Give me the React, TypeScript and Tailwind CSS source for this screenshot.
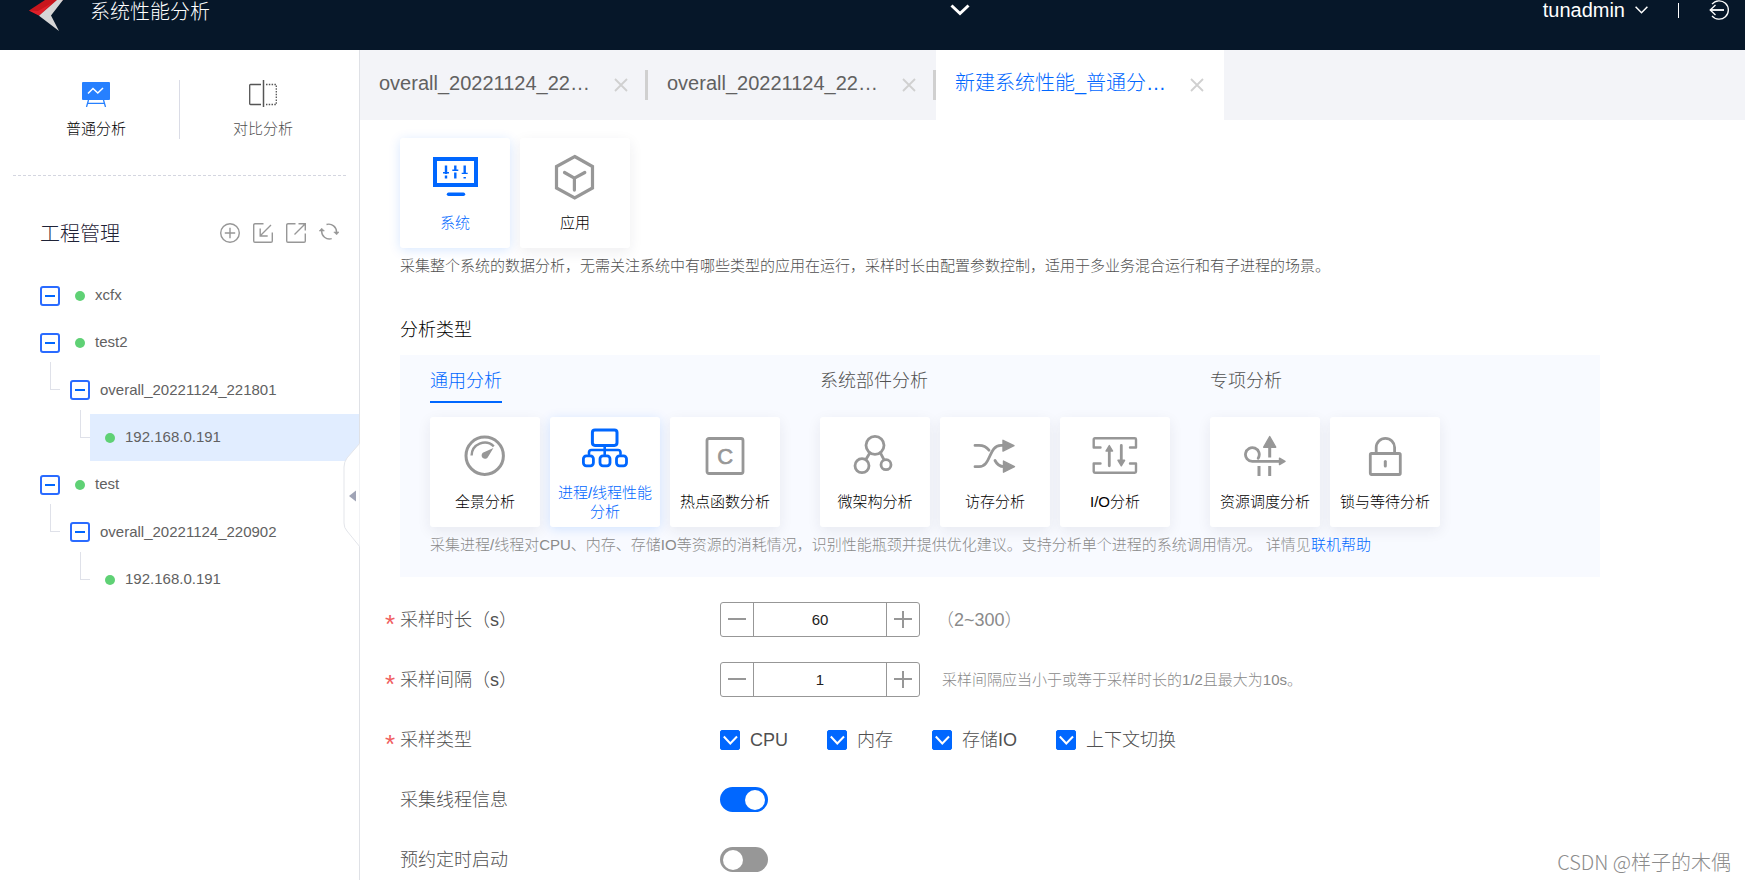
import { useState, type ReactNode } from "react";
import clsx from "clsx";

/* ---------- icons ---------- */

function CardSvg({ children }: { children: ReactNode }) {
  return (
    <svg
      viewBox="0 0 48 48"
      className="h-12 w-12 shrink-0"
      fill="none"
      stroke="currentColor"
      strokeWidth="2.8"
      strokeLinecap="round"
      strokeLinejoin="round"
      aria-hidden="true"
    >
      {children}
    </svg>
  );
}

const SystemIcon = () => (
  <CardSvg>
    <rect x="4" y="7" width="41" height="26" strokeWidth="4" strokeLinejoin="miter" />
    <path d="M17.5 42.3h15" strokeWidth="3.4" />
    <path d="M15 13.5v8.5M15 23.5v3M24.3 13.5v4.5M24.3 20.5v6M33.7 13.5v8.5M33.7 25v1.5" strokeWidth="2.4" strokeLinecap="butt" />
    <path d="M12 20.8h6M21.3 18.2h6M30.7 21.4h6" strokeWidth="1.4" strokeLinecap="butt" />
  </CardSvg>
);

const AppIcon = () => (
  <CardSvg>
    <path d="M23.7 4.5 41.5 14.5V36L23.7 46 5.5 36V14.5Z" strokeWidth="3.2" strokeLinejoin="miter" />
    <path d="M13.5 20.5l9.9 5.6 10.4-5.6M23.4 26.1v12" strokeWidth="3.2" />
  </CardSvg>
);

const GaugeIcon = () => (
  <CardSvg>
    <circle cx="23.7" cy="24.7" r="18.7" strokeWidth="3" />
    <path d="M10.6 24.5A13.1 13.1 0 0 1 32.8 15.3" strokeWidth="2.4" strokeLinecap="butt" />
    <path d="M32.4 17 27 26a3.4 3.4 0 1 1-5.2-4.2Z" fill="currentColor" stroke="none" />
  </CardSvg>
);

const ProcessIcon = () => (
  <CardSvg>
    <rect x="11.4" y="8" width="24.6" height="15.4" rx="2.6" strokeWidth="3" />
    <path d="M23.7 23.4v9M8 32V30.5a2.5 2.5 0 0 1 2.5-2.5h26.5a2.5 2.5 0 0 1 2.5 2.5V32" strokeWidth="2.6" />
    <rect x="2.4" y="33.8" width="10" height="10" rx="3" />
    <rect x="19" y="33.8" width="10" height="10" rx="3" />
    <rect x="35.5" y="33.8" width="10" height="10" rx="3" />
  </CardSvg>
);

const HotspotIcon = () => (
  <CardSvg>
    <rect x="6" y="7.5" width="36" height="35" rx="2" />
    <text
      x="24.2"
      y="32.6"
      fontSize="22"
      textAnchor="middle"
      fill="currentColor"
      strokeWidth="0.7"
      className="font-['Liberation_Sans',sans-serif]"
    >
      C
    </text>
  </CardSvg>
);

const MicroIcon = () => (
  <CardSvg>
    <circle cx="24" cy="14.3" r="9" />
    <circle cx="11" cy="34.7" r="7" />
    <circle cx="35" cy="33.7" r="5" />
    <path d="M18.8 22l-3.6 6M29.4 21.8l3.4 6.6" />
  </CardSvg>
);

const MemoryIcon = () => (
  <CardSvg>
    <path d="M4 14.4h4c4.5 0 7.5 1.6 10 4.8" />
    <path d="M4 35.7h4c12.5 0 9-21 22-21.3h3" />
    <path d="M24 29.5c2 4 4.5 6 9 6.2" />
    <path d="M32 9.3 43 14.7 32 20.1ZM32.5 30 43.5 35.7 32.5 41.2Z" fill="currentColor" strokeWidth="1.4" />
  </CardSvg>
);

const IoIcon = () => (
  <CardSvg>
    <path d="M9.5 16.5H2.7V8.5a1.2 1.2 0 0 1 1.2-1.2h39.9a1.2 1.2 0 0 1 1.2 1.2v8H39" strokeWidth="2.4" />
    <path d="M9.5 32.5H2.7v8a1.2 1.2 0 0 0 1.2 1.2h39.9a1.2 1.2 0 0 0 1.2-1.2v-8H39" strokeWidth="2.4" />
    <path d="M18.3 18v16.8M30.3 14.5v16" />
    <path d="M18.3 14.5l3.3 5.5h-6.6ZM30.3 34.8l3.3-5.5h-6.6Z" fill="currentColor" strokeWidth="1.4" />
  </CardSvg>
);

const ScheduleIcon = () => (
  <CardSvg>
    <path d="M17.2 27.2A6.9 6.9 0 1 0 11.3 30.4H39" />
    <path d="M28.7 17v9.5M28.7 35v10M18 35v10" strokeLinecap="butt" strokeWidth="3" />
    <path d="M28.7 5.5l6 10.7h-12ZM38.5 27.2l5.5 3.2-5.5 3.2Z" fill="currentColor" strokeWidth="1.4" />
  </CardSvg>
);

const LockIcon = () => (
  <CardSvg>
    <rect x="9.3" y="22.5" width="30" height="21" rx="1.2" />
    <path d="M15.2 22v-5.5a9.2 9.2 0 0 1 18.4 0V22" />
    <path d="M24.3 30.5v4.5" strokeWidth="3" />
  </CardSvg>
);

const CloseIcon = () => (
  <svg viewBox="0 0 14 14" className="h-3.5 w-3.5" stroke="currentColor" strokeWidth="1.8" aria-hidden="true">
    <path d="M1 1l12 12M13 1L1 13" />
  </svg>
);

function ToolSvg({ children }: { children: ReactNode }) {
  return (
    <svg viewBox="0 0 20 20" className="h-5 w-5" fill="none" stroke="currentColor" strokeWidth="1.4" aria-hidden="true">
      {children}
    </svg>
  );
}

const tools = [
  {
    label: "新建工程",
    icon: (
      <ToolSvg>
        <circle cx="10" cy="10" r="9.3" />
        <path d="M10 4.8v10.4M4.8 10h10.4" />
      </ToolSvg>
    ),
  },
  {
    label: "导入",
    icon: (
      <ToolSvg>
        <path d="M10.5.7H2A1.3 1.3 0 0 0 .7 2v16A1.3 1.3 0 0 0 2 19.3h16a1.3 1.3 0 0 0 1.3-1.3V9.5" />
        <path d="M18 2 7.5 12.5M7.2 5.5v7.5h7.5" />
      </ToolSvg>
    ),
  },
  {
    label: "导出",
    icon: (
      <ToolSvg>
        <path d="M9.5.7H2A1.3 1.3 0 0 0 .7 2v16A1.3 1.3 0 0 0 2 19.3h16a1.3 1.3 0 0 0 1.3-1.3v-7.5" />
        <path d="M8.5 11.5 19 1M12.5.7h6.8v6.8" />
      </ToolSvg>
    ),
  },
  {
    label: "刷新",
    icon: (
      <ToolSvg>
        <path d="M7.5 1.5a7.8 7.8 0 0 1 10 8M12.7 15.7A7.8 7.8 0 0 1 2.7 7.5" />
        <path d="M14.8 9l2.8 2.8L20 9ZM.2 8 2.7 5.2 5.4 8Z" fill="currentColor" strokeWidth=".6" />
      </ToolSvg>
    ),
  },
];

/* ---------- data ---------- */

type Card = { name: string; icon: ReactNode };

const targets: Card[] = [
  { name: "系统", icon: <SystemIcon /> },
  { name: "应用", icon: <AppIcon /> },
];

const groups: { title: string; cards: Card[] }[] = [
  {
    title: "通用分析",
    cards: [
      { name: "全景分析", icon: <GaugeIcon /> },
      { name: "进程/线程性能分析", icon: <ProcessIcon /> },
      { name: "热点函数分析", icon: <HotspotIcon /> },
    ],
  },
  {
    title: "系统部件分析",
    cards: [
      { name: "微架构分析", icon: <MicroIcon /> },
      { name: "访存分析", icon: <MemoryIcon /> },
      { name: "I/O分析", icon: <IoIcon /> },
    ],
  },
  {
    title: "专项分析",
    cards: [
      { name: "资源调度分析", icon: <ScheduleIcon /> },
      { name: "锁与等待分析", icon: <LockIcon /> },
    ],
  },
];

const tree = [
  { level: 0, name: "xcfx" },
  { level: 0, name: "test2" },
  { level: 1, name: "overall_20221124_221801" },
  { level: 2, name: "192.168.0.191", active: true },
  { level: 0, name: "test" },
  { level: 1, name: "overall_20221124_220902" },
  { level: 2, name: "192.168.0.191" },
];

const tabs = ["overall_20221124_22…", "overall_20221124_22…", "新建系统性能_普通分…"];

/* ---------- pieces ---------- */

function Header() {
  return (
    <header className="flex h-[50px] shrink-0 items-start overflow-hidden bg-[#061729] pr-4 pl-7 text-xl leading-5 text-white">
      <div className="flex w-[54.2%] items-start">
        <svg viewBox="0 0 36 32" className="h-8 w-9" aria-hidden="true">
          <path d="M1 10.5 17 0h18L25 8 11 15.5Z" fill="#c8161d" />
          <path d="M1 10.5 10 11 24 3 11 15.5Z" fill="#e0202a" />
          <path d="M35 0 23 15.500 31 31 11 15.800 29 0Z" fill="#d6d6d6" />
        </svg>
        <h1 className="ml-[26px] pt-0.5">系统性能分析</h1>
      </div>
      <button type="button" aria-label="展开" className="pt-1">
        <svg viewBox="0 0 20 12" className="h-3 w-5" fill="none" stroke="currentColor" strokeWidth="3" aria-hidden="true">
          <path d="M1.5 1.5 10 9.5l8.5-8" />
        </svg>
      </button>
      <div className="ml-auto flex items-center">
        <button type="button" className="flex items-center gap-2.5">
          tunadmin
          <svg viewBox="0 0 13 8" className="h-2 w-[13px]" fill="none" stroke="currentColor" strokeWidth="1.5" aria-hidden="true">
            <path d="M.6.8l5.9 6 5.9-6" />
          </svg>
        </button>
        <span className="mx-[30px] h-[15px] w-px bg-white" />
        <button type="button" aria-label="退出">
          <svg viewBox="0 0 20 20" className="h-5 w-5" fill="none" stroke="currentColor" strokeWidth="1.3" aria-hidden="true">
            <path d="M3 4.2a9.2 9.2 0 1 1 0 11.6" />
            <path d="M6.5 5 1.2 10l5.3 5" />
            <path d="M1.5 10h13.5" strokeWidth="1.8" />
          </svg>
        </button>
      </div>
    </header>
  );
}

function TreeRow({ level, name, active }: { level: number; name: string; active?: boolean }) {
  return (
    <li
      className={clsx(
        "flex text-[15px] text-[#616161]",
        level === 0 && "h-[47px] pl-10",
        level === 1 && "h-12 pl-[50px]",
        level === 2 && "h-[47px] pl-20"
      )}
    >
      {level > 0 && (
        <span
          className={clsx("-mt-1 h-7 w-2.5 shrink-0 border-b border-l border-[#dfe1e9]", level === 1 && "mr-2.5")}
        />
      )}
      <div className={clsx("flex flex-1 items-center", active && "bg-[#e1edff]")}>
        {level < 2 && (
          <button
            type="button"
            aria-label="收起"
            className="flex h-5 w-5 items-center justify-center rounded-[3px] border-2 border-[#2a6bff]"
          >
            <span className="h-0.5 w-2.5 bg-[#0067ff]" />
          </button>
        )}
        {level !== 1 && <span className="ml-[15px] h-2.5 w-2.5 rounded-full bg-[#5fd175]" />}
        <span className="ml-2.5">{name}</span>
      </div>
    </li>
  );
}

function Sidebar() {
  return (
    <aside className="relative flex w-[360px] shrink-0 flex-col border-r border-[#dfe1e6]">
      <nav className="mx-[13px] border-b border-dashed border-[#d4d6e0] pt-[30px] pb-9">
        <div className="flex">
          <button type="button" className="flex flex-1 flex-col items-center gap-3 border-r border-[#dadce6] text-[15px] leading-5 text-black">
            <svg viewBox="0 0 28 27" className="h-[27px] w-7" fill="none" aria-hidden="true">
              <rect x="0" y="2" width="28" height="18" rx="1" fill="#2680ff" />
              <path d="M6 13.5l5-5 4.8 4.5 5.2-5" stroke="#fff" strokeWidth="1.5" />
              <path d="M6.5 20 4.5 27M21.5 20l2 7M5.8 23.3h16.5" stroke="#2680ff" strokeWidth="1.3" />
            </svg>
            普通分析
          </button>
          <button type="button" className="flex flex-1 flex-col items-center gap-3 text-[15px] leading-5 text-[#505050]">
            <svg viewBox="0 0 28 27" className="h-[27px] w-7" fill="none" stroke="#555" aria-hidden="true">
              <path d="M12 4.5H1.5A.8.8 0 0 0 .7 5.3v18.4a.8.8 0 0 0 .8.8H12" strokeWidth="1.3" />
              <path d="M14.5 0v27" strokeWidth="1.5" />
              <path d="M17 4.5h10.3v20H17" strokeWidth="1.3" strokeDasharray="1.5 1.3" />
            </svg>
            对比分析
          </button>
        </div>
      </nav>

      <div className="mt-11 flex items-start pr-5 pl-10">
        <h2 className="flex-1 text-xl leading-7 text-[#1f2337]">工程管理</h2>
        <div className="flex gap-[13px] pt-[3px] text-[#979797]">
          {tools.map((t) => (
            <button key={t.label} type="button" aria-label={t.label}>
              {t.icon}
            </button>
          ))}
        </div>
      </div>

      <ul className="mt-6">
        {tree.map((node, i) => (
          <TreeRow key={i} {...node} />
        ))}
      </ul>

      {/* collapse handle sitting on the sidebar edge */}
      <button type="button" aria-label="收起侧栏" className="absolute top-[393px] -right-px">
        <svg viewBox="0 0 17 104" className="h-[104px] w-[17px]" aria-hidden="true">
          <path d="M17 0 4 15Q1 19 1 24V80q0 5 3 8l13 16Z" fill="#fff" stroke="#e3e5ea" />
          <path d="M13 47.5v11L6 53Z" fill="#a0a4b6" />
        </svg>
      </button>
    </aside>
  );
}

function TabBar() {
  return (
    <div className="flex h-[70px] shrink-0 bg-[#f3f4f8]">
      {tabs.map((name, i) => {
        const active = i === 2;
        return (
          <div key={i} className={clsx("flex w-[288px] items-center pl-[19px]", active && "bg-white")}>
            <a
              href="#"
              className={clsx("w-[212px] pb-1 text-xl whitespace-nowrap", active ? "text-[#0067ff]" : "text-[#616161]")}
            >
              {name}
            </a>
            <button type="button" aria-label="关闭" className="ml-[23px] text-[#d0d0d0]">
              <CloseIcon />
            </button>
            {!active && <span className="ml-auto h-[30px] w-[3px] bg-[#d0d0d0]" />}
          </div>
        );
      })}
    </div>
  );
}

function TypeCard({ card, active, onClick }: { card: Card; active: boolean; onClick: () => void }) {
  return (
    <button
      type="button"
      aria-pressed={active}
      onClick={onClick}
      className={clsx(
        "flex h-[110px] w-[110px] flex-col items-center justify-center gap-[13px] rounded-[3px] bg-white px-1.5 pb-0.5 text-[15px] leading-[19px]",
        active
          ? "text-[#0067ff] shadow-[0_2px_12px_rgba(0,103,255,0.16)]"
          : "text-black shadow-[0_4px_14px_rgba(40,40,60,0.08)]"
      )}
    >
      <span className={clsx(!active && "text-[#979797]")}>{card.icon}</span>
      {card.name}
    </button>
  );
}

function Stepper({ id, initial }: { id: string; initial: number }) {
  const [value, setValue] = useState(initial);
  return (
    <div className="flex h-[35px] w-[200px] rounded-[3px] border border-[#979797] text-[#979797]">
      <button
        type="button"
        aria-label="减"
        onClick={() => setValue(value - 1)}
        className="flex w-[33px] items-center justify-center border-r border-[#979797]"
      >
        <svg viewBox="0 0 18 18" className="h-[18px] w-[18px]" stroke="currentColor" strokeWidth="2" aria-hidden="true">
          <path d="M0 8h18" />
        </svg>
      </button>
      <input
        id={id}
        type="text"
        value={value}
        onChange={(e) => setValue(Number(e.target.value) || 0)}
        className="min-w-0 flex-1 text-center text-[15px] text-[#222] outline-none"
      />
      <button
        type="button"
        aria-label="加"
        onClick={() => setValue(value + 1)}
        className="flex w-[33px] items-center justify-center border-l border-[#979797]"
      >
        <svg viewBox="0 0 18 18" className="h-[18px] w-[18px]" stroke="currentColor" strokeWidth="2" aria-hidden="true">
          <path d="M0 8h18M9 0v17" />
        </svg>
      </button>
    </div>
  );
}

function Checkbox({ label }: { label: string }) {
  return (
    <label className="flex items-center gap-2.5">
      <span className="grid">
        <input
          type="checkbox"
          defaultChecked
          className="peer col-start-1 row-start-1 h-5 w-5 appearance-none rounded-[2px] border border-[#979797] checked:border-[#0067ff] checked:bg-[#0067ff]"
        />
        <svg
          viewBox="0 0 20 20"
          className="pointer-events-none invisible col-start-1 row-start-1 h-5 w-5 peer-checked:visible"
          fill="none"
          stroke="#fff"
          strokeWidth="2"
          aria-hidden="true"
        >
          <path d="M3.8 6.5 10.3 13.5l6.7-7" />
        </svg>
      </span>
      {label}
    </label>
  );
}

function Switch({ id, on }: { id: string; on?: boolean }) {
  return (
    <input
      id={id}
      type="checkbox"
      role="switch"
      defaultChecked={on}
      className="flex h-[25px] w-12 appearance-none items-center rounded-full bg-[#979797] px-[3px] before:h-5 before:w-5 before:rounded-full before:bg-white checked:justify-end checked:bg-[#0067ff]"
    />
  );
}

function FormRow({ label, htmlFor, required, children }: { label: string; htmlFor?: string; required?: boolean; children: ReactNode }) {
  return (
    <div className="flex h-[35px] items-center">
      <span className="w-[15px] pt-2 text-[26px] leading-none text-[#f0605f]">{required && "*"}</span>
      {htmlFor ? (
        <label htmlFor={htmlFor} className="w-80">
          {label}
        </label>
      ) : (
        <span className="w-80">{label}</span>
      )}
      {children}
    </div>
  );
}

/* ---------- page ---------- */

export default function App() {
  const [target, setTarget] = useState("系统");
  const [kind, setKind] = useState("进程/线程性能分析");

  return (
    <div className="relative flex min-h-screen flex-col bg-white font-['Liberation_Sans','Noto_Sans_CJK_SC',sans-serif] font-light">
      <Header />
      <div className="flex flex-1">
        <Sidebar />
        <main className="min-w-0 flex-1">
          <TabBar />

          <div className="px-10 pt-[18px]">
            <div className="flex gap-2.5">
              {targets.map((c) => (
                <TypeCard key={c.name} card={c} active={c.name === target} onClick={() => setTarget(c.name)} />
              ))}
            </div>
            <p className="mt-2 text-[15px] leading-5 text-[#505050]">
              采集整个系统的数据分析，无需关注系统中有哪些类型的应用在运行，采样时长由配置参数控制，适用于多业务混合运行和有子进程的场景。
            </p>

            <h3 className="mt-[42px] mb-[13px] text-lg leading-6 text-black">分析类型</h3>
            <section className="max-w-[1200px] bg-[#f8faff] px-[30px] pt-3.5 pb-[22px]">
              <div className="flex gap-10">
                {groups.map((g) => {
                  const current = g.cards.some((c) => c.name === kind);
                  return (
                    <div key={g.title}>
                      <h4
                        className={clsx(
                          "w-fit border-b-2 pb-2 text-lg leading-6",
                          current ? "border-[#0067ff] text-[#0067ff]" : "border-transparent text-[#505050]"
                        )}
                      >
                        {g.title}
                      </h4>
                      <div className="mt-3.5 flex gap-2.5">
                        {g.cards.map((c) => (
                          <TypeCard key={c.name} card={c} active={c.name === kind} onClick={() => setKind(c.name)} />
                        ))}
                      </div>
                    </div>
                  );
                })}
              </div>
              <p className="mt-2 text-[15px] leading-5 text-[#8a8a8a]">
                采集进程/线程对CPU、内存、存储IO等资源的消耗情况，识别性能瓶颈并提供优化建议。支持分析单个进程的系统调用情况。{" "}
                详情见
                <a href="#" className="text-[#0067ff]">
                  联机帮助
                </a>
              </p>
            </section>

            <form className="mt-[25px] -ml-[15px] flex flex-col gap-[25px] text-lg leading-6 text-[#505050]">
              <FormRow label="采样时长（s）" htmlFor="duration" required>
                <Stepper id="duration" initial={60} />
                <span className="ml-4 text-[#8a8a8a]">（2~300）</span>
              </FormRow>
              <FormRow label="采样间隔（s）" htmlFor="interval" required>
                <Stepper id="interval" initial={1} />
                <span className="ml-[22px] text-[15px] text-[#8a8a8a]">采样间隔应当小于或等于采样时长的1/2且最大为10s。</span>
              </FormRow>
              <FormRow label="采样类型" required>
                <div className="flex gap-[39px]">
                  <Checkbox label="CPU" />
                  <Checkbox label="内存" />
                  <Checkbox label="存储IO" />
                  <Checkbox label="上下文切换" />
                </div>
              </FormRow>
              <FormRow label="采集线程信息" htmlFor="threads">
                <Switch id="threads" on />
              </FormRow>
              <FormRow label="预约定时启动" htmlFor="schedule">
                <Switch id="schedule" />
              </FormRow>
            </form>
          </div>
        </main>
      </div>

      <p className="absolute right-3.5 bottom-1.5 font-['Noto_Sans_CJK_SC',sans-serif] text-xl leading-6 text-[#8c8c8c]">
        CSDN @样子的木偶
      </p>
    </div>
  );
}
